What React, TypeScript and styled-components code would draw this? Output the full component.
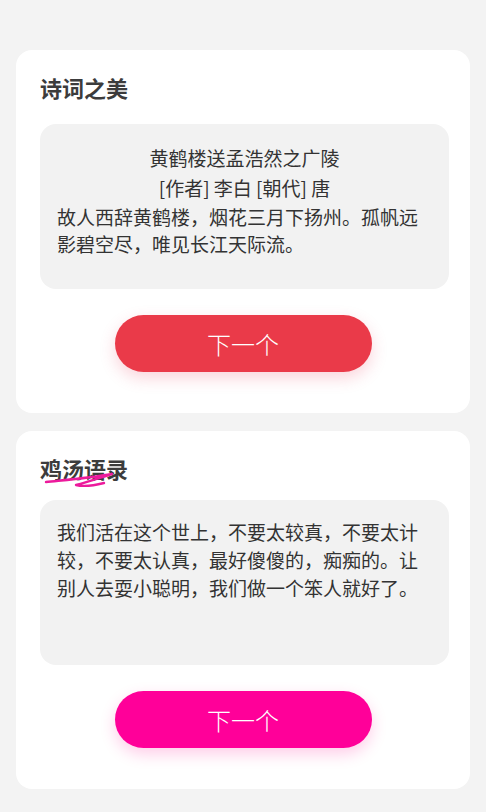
import React from 'react'
import styled, { createGlobalStyle } from 'styled-components'

const GlobalStyle = createGlobalStyle`
  html, body {
    margin: 0;
    padding: 0;
    background: #f3f3f3;
    font-family: "Noto Sans CJK SC", "Noto Sans", sans-serif;
    color: #333;
  }
`

const Page = styled.div`
  padding: 50px 16px 23px;
  display: flex;
  flex-direction: column;
  gap: 18px;
`

const Card = styled.div`
  background: #fff;
  border-radius: 16px;
  padding: 22px 21px 41px 24px;
  display: flex;
  flex-direction: column;
`

const TitleWrap = styled.div<{ $gap: number }>`
  position: relative;
  align-self: flex-start;
  margin-bottom: ${(p) => p.$gap}px;
`

const CardTitle = styled.h2`
  margin: 0;
  font-size: 22px;
  line-height: 30px;
  font-weight: 700;
  color: #3c3c3c;
`

const Scribble = styled.svg`
  position: absolute;
  left: 0;
  top: 0;
  pointer-events: none;
`

const ContentBox = styled.div`
  background: #f2f2f2;
  border-radius: 16px;
  height: 165px;
  box-sizing: border-box;
  padding: 19px 17px;
  font-size: 19px;
  color: #333;
`

const PoemTitle = styled.div`
  text-align: center;
  line-height: 30px;
`

const PoemText = styled.div`
  line-height: 27px;
`

const QuoteText = styled.div`
  line-height: 28px;
  margin-top: -1px;
`

const NextButton = styled.button<{ $color: string; $glow: string }>`
  align-self: center;
  margin: 26px 0 0 -3px;
  width: 257px;
  height: 57px;
  border: none;
  border-radius: 29px;
  background: ${(p) => p.$color};
  box-shadow: 0 6px 16px ${(p) => p.$glow};
  color: #fff;
  font-family: "Noto Sans CJK SC", sans-serif;
  font-size: 24px;
  font-weight: 300;
  cursor: pointer;
`

export default function App() {
  return (
    <>
      <GlobalStyle />
      <Page>
        <Card>
          <TitleWrap $gap={22}>
            <CardTitle>诗词之美</CardTitle>
          </TitleWrap>
          <ContentBox>
            <PoemTitle>黄鹤楼送孟浩然之广陵</PoemTitle>
            <PoemTitle>[作者] 李白 [朝代] 唐</PoemTitle>
            <PoemText>故人西辞黄鹤楼，烟花三月下扬州。孤帆远影碧空尽，唯见长江天际流。</PoemText>
          </ContentBox>
          <NextButton $color="#ea3a49" $glow="rgba(234, 58, 90, 0.22)">下一个</NextButton>
        </Card>
        <Card>
          <TitleWrap $gap={17}>
            <CardTitle>鸡汤语录</CardTitle>
            <Scribble width="100" height="40" viewBox="0 0 100 40">
              <path
                d="M6 29 C 25 27, 50 25, 72 21 C 62 24, 48 29, 36 32 C 44 34, 56 32, 64 30"
                fill="none"
                stroke="#ec1a9c"
                strokeWidth="2.4"
                strokeLinecap="round"
                strokeLinejoin="round"
              />
            </Scribble>
          </TitleWrap>
          <ContentBox>
            <QuoteText>
              我们活在这个世上，不要太较真，不要太计较，不要太认真，最好傻傻的，痴痴的。让别人去耍小聪明，我们做一个笨人就好了。
            </QuoteText>
          </ContentBox>
          <NextButton $color="#ff0099" $glow="rgba(255, 0, 140, 0.2)">下一个</NextButton>
        </Card>
      </Page>
    </>
  )
}
